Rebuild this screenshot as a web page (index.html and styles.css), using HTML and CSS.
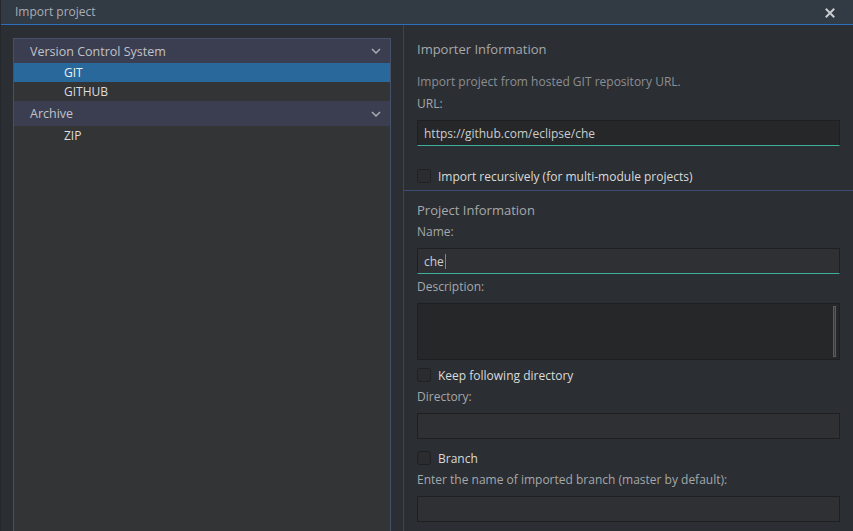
FILE: index.html
```html
<!DOCTYPE html>
<html>
<head>
<meta charset="utf-8">
<link rel="stylesheet" href="styles.css">
</head>
<body>
<div class="dialog">
  <div class="titlebar">
    <span class="title">Import project</span>
    <svg class="close" width="10" height="10" viewBox="0 0 10 10"><path d="M1.5 1.5 L8.5 8.5 M8.5 1.5 L1.5 8.5" stroke="#c9cbce" stroke-width="2" stroke-linecap="square"/></svg>
  </div>
  <div class="body">
    <div class="left">
      <div class="list">
        <div class="cat"><span>Version Control System</span><svg class="chev" width="10" height="6" viewBox="0 0 10 6"><path d="M1 1 L5 5 L9 1" fill="none" stroke="#a8abb2" stroke-width="1.5"/></svg></div>
        <div class="item selected">GIT</div>
        <div class="item">GITHUB</div>
        <div class="cat cat2"><span>Archive</span><svg class="chev" width="10" height="6" viewBox="0 0 10 6"><path d="M1 1 L5 5 L9 1" fill="none" stroke="#a8abb2" stroke-width="1.5"/></svg></div>
        <div class="item">ZIP</div>
      </div>
    </div>
    <div class="right">
      <div class="section sec1">
        <div class="heading">Importer Information</div>
        <div class="desc">Import project from hosted GIT repository URL.</div>
        <div class="label">URL:</div>
        <div class="input url-input">https://github.com/eclipse/che</div>
        <div class="check check-rec"><span class="box"></span><span class="check-text">Import recursively (for multi-module projects)</span></div>
      </div>
      <div class="section sec2">
        <div class="heading">Project Information</div>
        <div class="label">Name:</div>
        <div class="input name-input">che<span class="caret"></span></div>
        <div class="label label-after">Description:</div>
        <div class="textarea"><span class="scroll"></span></div>
        <div class="check check-keep"><span class="box"></span><span class="check-text">Keep following directory</span></div>
        <div class="label label-after">Directory:</div>
        <div class="input plain-input"></div>
        <div class="check check-branch"><span class="box"></span><span class="check-text">Branch</span></div>
        <div class="label label-after">Enter the name of imported branch (master by default):</div>
        <div class="input plain-input"></div>
      </div>
    </div>
  </div>
</div>
</body>
</html>
```

FILE: styles.css
```css
* { box-sizing: border-box; }
html, body {
  margin: 0;
  padding: 0;
  width: 853px;
  height: 531px;
  overflow: hidden;
  background: #2b2e32;
  font-family: "Open Sans", "Liberation Sans", sans-serif;
  font-size: 12px;
}
.dialog {
  width: 853px;
  height: 531px;
  display: flex;
  flex-direction: column;
  border-left: 1px solid #24282c;
}
.titlebar {
  height: 25px;
  flex: none;
  background: #323a44;
  border-bottom: 1px solid #2c6fbd;
  display: flex;
  align-items: center;
  justify-content: space-between;
  padding: 0 18px 0 14px;
}
.title {
  color: #a9aeb4;
  font-size: 12px;
  line-height: 24px;
}
.close { display: block; margin-top: 1px; }
.body {
  flex: 1;
  display: flex;
  min-height: 0;
}
.left {
  width: 402px;
  flex: none;
  padding: 13px 12px 0 12px;
  display: flex;
}
.list {
  flex: 1;
  background: #333436;
  border: 1px solid #465068;
  border-bottom: none;
}
.cat {
  height: 24px;
  background: #3b3e51;
  color: #c0c2c7;
  display: flex;
  align-items: center;
  justify-content: space-between;
  padding: 0 9px 0 16px;
  font-size: 12.5px;
}
.cat2 { height: 25px; }
.chev { display: block; }
.item {
  height: 19px;
  line-height: 19px;
  padding-left: 50px;
  color: #dcdddf;
}
.item.selected {
  background: #29689b;
  color: #eef0f2;
}
.right {
  flex: 1;
  border-left: 1px solid #3b4556;
  display: flex;
  flex-direction: column;
}
.section {
  padding: 0 13px;
}
.sec1 {
  padding-top: 15px;
  padding-bottom: 5px;
  border-bottom: 1px solid #3c4d74;
}
.sec2 {
  padding-top: 10px;
}
.heading {
  line-height: 18px;
  font-size: 13px;
  font-weight: 500;
  color: #a6a9ac;
}
.desc {
  margin-top: 15px;
  line-height: 18px;
  color: #8b8f94;
}
.label {
  margin-top: 4px;
  line-height: 18px;
  color: #a5a8ab;
}
.input {
  margin-top: 7px;
  height: 26px;
  border: 1px solid #1d1f21;
  background: #2f3033;
  color: #cbcdcf;
  padding-left: 6px;
  line-height: 23px;
  display: flex;
  align-items: center;
}
.url-input {
  background: #252729;
  border-bottom: 1px solid #3cb09c;
}
.name-input {
  border-bottom: 1px solid #3cb09c;
}
.caret {
  display: inline-block;
  width: 1px;
  height: 15px;
  background: #4f8fe0;
  margin-left: 1px;
}
.textarea {
  margin-top: 7px;
  height: 57px;
  border: 1px solid #1d1f21;
  background: #262729;
  display: flex;
  justify-content: flex-end;
  padding: 2px 3px 2px 0;
}
.scroll {
  width: 3px;
  height: 51px;
  border: 1px solid #5a5c60;
  background: #3a3c3f;
}
.check {
  display: flex;
  align-items: center;
  height: 18px;
}
.check-rec { margin-top: 21px; }
.check-keep { margin-top: 6px; }
.check-branch { margin-top: 10px; }
.box {
  width: 14px;
  height: 14px;
  border-radius: 3px;
  background: #2a2c2f;
  border: 1px solid #1e2022;
  flex: none;
}
.check-text {
  margin-left: 7px;
  color: #dadbdc;
  font-weight: 500;
}
.label-after { margin-top: 4px; }
```
